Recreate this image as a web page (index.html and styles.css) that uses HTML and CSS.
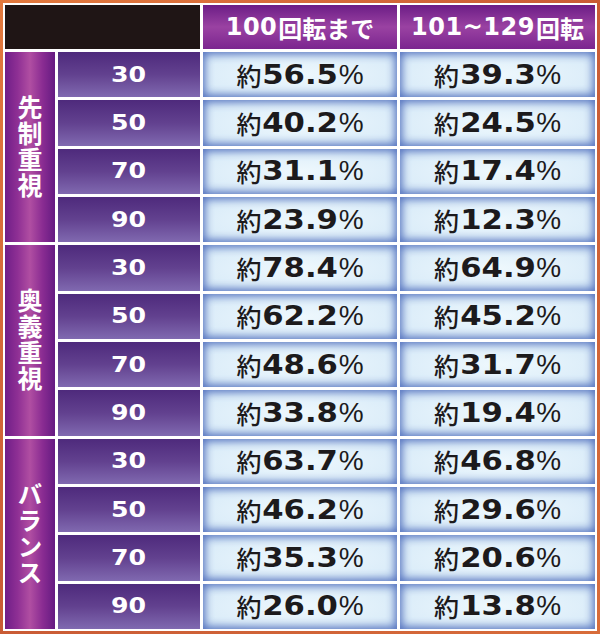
FILE: index.html
```html
<!DOCTYPE html>
<html lang="ja">
<head>
<meta charset="utf-8">
<link rel="stylesheet" href="styles.css">
</head>
<body>
<div class="table">
  <div class="corner"></div>
  <div class="head"><span class="d">100</span>回転まで</div>
  <div class="head"><span class="d">101~129</span>回転</div>

  <div class="group g1"><span class="vt">先制重視</span></div>
  <div class="num"><span class="d">30</span></div>
  <div class="val">約<span class="d">56.5</span><span class="pc">%</span></div>
  <div class="val">約<span class="d">39.3</span><span class="pc">%</span></div>
  <div class="num"><span class="d">50</span></div>
  <div class="val">約<span class="d">40.2</span><span class="pc">%</span></div>
  <div class="val">約<span class="d">24.5</span><span class="pc">%</span></div>
  <div class="num"><span class="d">70</span></div>
  <div class="val">約<span class="d">31.1</span><span class="pc">%</span></div>
  <div class="val">約<span class="d">17.4</span><span class="pc">%</span></div>
  <div class="num"><span class="d">90</span></div>
  <div class="val">約<span class="d">23.9</span><span class="pc">%</span></div>
  <div class="val">約<span class="d">12.3</span><span class="pc">%</span></div>

  <div class="group g2"><span class="vt">奥義重視</span></div>
  <div class="num"><span class="d">30</span></div>
  <div class="val">約<span class="d">78.4</span><span class="pc">%</span></div>
  <div class="val">約<span class="d">64.9</span><span class="pc">%</span></div>
  <div class="num"><span class="d">50</span></div>
  <div class="val">約<span class="d">62.2</span><span class="pc">%</span></div>
  <div class="val">約<span class="d">45.2</span><span class="pc">%</span></div>
  <div class="num"><span class="d">70</span></div>
  <div class="val">約<span class="d">48.6</span><span class="pc">%</span></div>
  <div class="val">約<span class="d">31.7</span><span class="pc">%</span></div>
  <div class="num"><span class="d">90</span></div>
  <div class="val">約<span class="d">33.8</span><span class="pc">%</span></div>
  <div class="val">約<span class="d">19.4</span><span class="pc">%</span></div>

  <div class="group g3"><span class="vt">バランス</span></div>
  <div class="num"><span class="d">30</span></div>
  <div class="val">約<span class="d">63.7</span><span class="pc">%</span></div>
  <div class="val">約<span class="d">46.8</span><span class="pc">%</span></div>
  <div class="num"><span class="d">50</span></div>
  <div class="val">約<span class="d">46.2</span><span class="pc">%</span></div>
  <div class="val">約<span class="d">29.6</span><span class="pc">%</span></div>
  <div class="num"><span class="d">70</span></div>
  <div class="val">約<span class="d">35.3</span><span class="pc">%</span></div>
  <div class="val">約<span class="d">20.6</span><span class="pc">%</span></div>
  <div class="num"><span class="d">90</span></div>
  <div class="val">約<span class="d">26.0</span><span class="pc">%</span></div>
  <div class="val">約<span class="d">13.8</span><span class="pc">%</span></div>
</div>
</body>
</html>
```

FILE: styles.css
```css
html, body {
  margin: 0;
  padding: 0;
}
body {
  width: 600px;
  height: 634px;
  box-sizing: border-box;
  padding: 3px;
  background: linear-gradient(135deg, #e2793e 0%, #c95b35 50%, #d86c3a 100%);
  overflow: hidden;
}
.table {
  box-sizing: border-box;
  width: 594px;
  height: 628px;
  padding: 2px;
  background: #ffffff;
  display: grid;
  grid-template-columns: 50px 142px 194px 195px;
  grid-template-rows: 44px repeat(12, 1fr);
  gap: 3px;
  font-family: "DejaVu Sans", "Noto Sans CJK JP", sans-serif;
}
.corner {
  grid-column: 1 / span 2;
  background: #1f1515;
}
.head {
  display: flex;
  align-items: center;
  justify-content: center;
  color: #ffffff;
  font-family: "Noto Sans CJK JP", sans-serif;
  font-weight: 700;
  font-size: 24px;
  background: linear-gradient(to bottom, #6c1d86 0%, #9a42a2 50%, #7b258f 100%);
}
.head .d {
  font-family: "DejaVu Sans", sans-serif;
  font-weight: 700;
  font-size: 24px;
  letter-spacing: 0.5px;
  margin-right: 1px;
}
.group {
  grid-row: span 4;
  display: flex;
  align-items: center;
  justify-content: center;
  background: linear-gradient(to right, #701e88 0%, #8e2f94 25%, #b04ea2 50%, #8a2c92 75%, #651b82 100%);
}
.vt {
  writing-mode: vertical-rl;
  text-orientation: upright;
  color: #ffffff;
  font-family: "Noto Sans CJK JP", sans-serif;
  font-weight: 700;
  font-size: 25px;
  letter-spacing: 1px;
}
.num {
  display: flex;
  align-items: center;
  justify-content: center;
  background: linear-gradient(to bottom, #4e2a7c 0%, #62418f 50%, #8069b0 100%);
  color: #ffffff;
}
.num .d {
  display: inline-block;
  font-family: "DejaVu Sans", sans-serif;
  font-weight: 700;
  font-size: 21px;
  transform: scaleX(1.2);
  margin: 0 3px;
}
.val {
  display: flex;
  align-items: center;
  justify-content: center;
  background: radial-gradient(ellipse at center, #eef8fd 0%, #dcedf9 70%, #c9def3 100%);
  box-shadow: inset 0 0 8px 2px rgba(75, 105, 185, 0.95);
  color: #1c1a1c;
  font-family: "Noto Sans CJK JP", sans-serif;
  font-weight: 500;
  font-size: 25px;
}
.val .d {
  display: inline-block;
  font-family: "DejaVu Sans", sans-serif;
  font-weight: 700;
  font-size: 26px;
  transform: scaleX(1.18);
  margin: 0 6px 0 7px;
}
.val .pc {
  font-family: "Liberation Sans", sans-serif;
  font-weight: 400;
  font-size: 28px;
}
```
